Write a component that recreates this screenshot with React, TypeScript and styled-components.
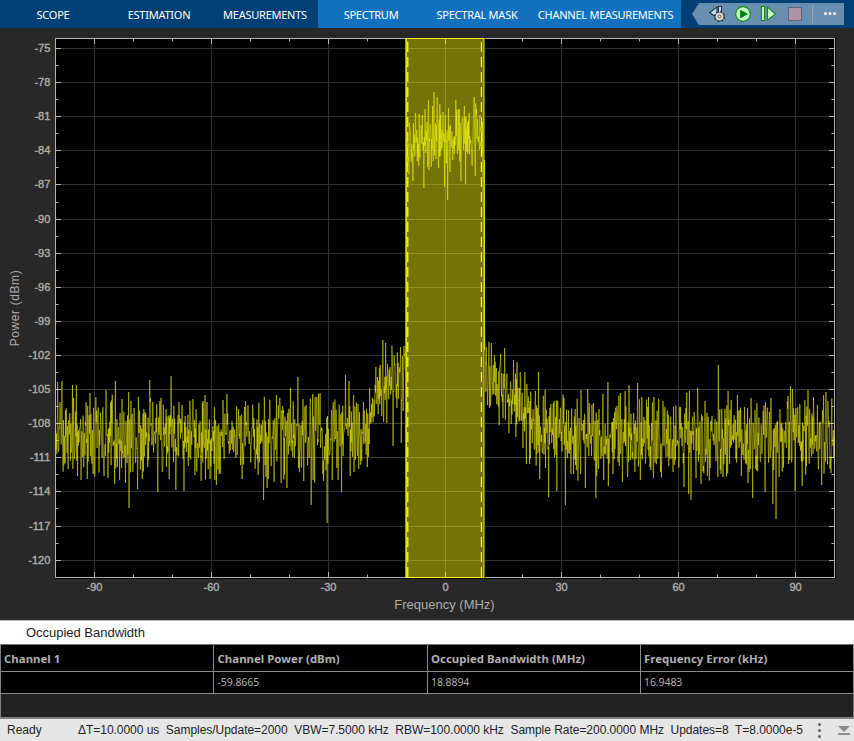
import React from "react";
import styled, { createGlobalStyle } from "styled-components";

const GlobalStyle = createGlobalStyle`
  * { box-sizing: border-box; }
  body { margin: 0; background: #282828; overflow: hidden; }
`;

const Window = styled.div`
  width: 854px;
  height: 741px;
  display: flex;
  flex-direction: column;
  background: #282828;
  font-family: "Liberation Sans", Arial, sans-serif;
`;

const Toolstrip = styled.header`
  display: flex;
  height: 28px;
  flex: none;
  background: #004076;
`;

const Tab = styled.button<{ $width: number; $contextual?: boolean }>`
  width: ${(p) => p.$width}px;
  height: 28px;
  flex: none;
  border: 0;
  padding: 2px 0 0;
  background: ${(p) => (p.$contextual ? "#1171be" : "#004076")};
  color: #fff;
  font: 11px/26px "Noto Sans", sans-serif;
  letter-spacing: -0.25px;
  text-align: center;
  white-space: nowrap;
`;

const QuickAccess = styled.div`
  display: flex;
  margin: 3px 10px 0 auto;
  width: 152px;
  height: 22px;
`;

const ChartPane = styled.main`
  height: 592px;
  flex: none;
  svg { display: block; }
`;

const PanelTitle = styled.div`
  height: 24px;
  flex: none;
  padding-left: 26px;
  background: #fff;
  border-top: 1px solid #b5b5b5;
  color: #1c1c1c;
  font-size: 13px;
  line-height: 23px;
  letter-spacing: -0.02px;
`;

const Results = styled.section`
  height: 75px;
  flex: none;
  background: #222;
  border: 1px solid #808080;
  border-bottom-width: 2px;
  border-top-color: #707476;
`;

const ResultRow = styled.div<{ $height: number }>`
  display: grid;
  grid-template-columns: 213px 214px 213px 212px;
  height: ${(p) => p.$height}px;
  border-bottom: 1px solid #8a8a8a;
  background: #000;
`;

const Cell = styled.div<{ $heading?: boolean }>`
  padding-left: 3px;
  border-right: 1px solid #8a8a8a;
  color: #b0b0b0;
  font: ${(p) => (p.$heading ? "700 11.4px/28px" : "400 10.5px/21px")} "Noto Sans", sans-serif;
  letter-spacing: ${(p) => (p.$heading ? "0.03px" : "-0.08px")};
  white-space: nowrap;
  &:nth-child(2) { padding-left: 3.5px; }
  &:last-child { border-right: 0; }
`;

const StatusBar = styled.footer`
  display: flex;
  align-items: center;
  height: 22px;
  flex: none;
  padding: 0 3px 0 7px;
  background: #e6e6e6;
  color: #222;
  font-size: 12px;
  white-space: pre;
`;

const Ready = styled.span`
  width: 71px;
`;

const Details = styled.span`
  flex: 1;
  letter-spacing: -0.036px;
`;

const AxisText = styled.text`
  fill: #acacac;
  stroke: #acacac;
  stroke-width: 0.4px;
  font: 11px "Liberation Sans", Arial, sans-serif;
`;

const AxisTitle = styled.text`
  fill: #acacac;
  font-family: "Liberation Sans", Arial, sans-serif;
  text-anchor: middle;
`;

const LEFT = 55.5;
const RIGHT = 834.5;
const TOP = 38.5;
const BOTTOM = 577.5;

// Chart coordinates are expressed in window pixels; the view box starts below the toolstrip.
const xOf = (mhz: number) => Math.floor(445 + mhz * 3.895 + (mhz > 0 && mhz < 90 ? -0.1 : 0.3)) + 0.5;
const yOf = (dbm: number) => Math.floor(48.55 + (-75 - dbm) * 11.369) + 0.5;

const xMajor = [-90, -60, -30, 0, 30, 60, 90];
const xMinor = [-80, -70, -50, -40, -20, -10, 10, 20, 40, 50, 70, 80];
const yMajor = Array.from({ length: 16 }, (_, i) => -75 - i * 3);
const yMinor = Array.from({ length: 15 }, (_, i) => -76.5 - i * 3);

// Strongest excursions of the spectrum, as [x, y] pairs.
const extremes: number[] = [
  57.5,382, 57,454, 62,381, 72.5,385, 73,469, 76.5,385, 77.6,476, 81,480, 87.3,479, 90,393, 93,474, 96,397,
  104,476, 106,390, 108,478, 114.5,484, 115.5,381, 119.5,480, 122,399, 125.5,483, 128.5,392, 129.2,508, 131,401,
  134,408, 137.5,489, 144,409, 149.5,380, 153,402, 158,492, 160,401, 162,472, 169,479, 171,376, 176,490,
  179,402, 184,491, 193,399, 195,475, 201,481, 205,395, 207,402, 210,479, 215,480, 216.5,485, 219,474,
  223,400, 227,394, 242,479, 245.5,401, 263.5,500, 264.5,397, 267,488, 274,482, 276.5,395, 281,483,
  283,413, 287,488, 290.5,388, 298,377, 303,399, 303.7,481, 306,405, 311,505, 315,397, 320,393, 323.5,481,
  327,523, 332.3,480, 333,403, 338,480, 341.5,492, 345.5,375, 349,381, 350,476, 353.5,395, 354,472,
  358,404, 363.5,402, 367.5,467, 369.5,388, 376,367, 380,365, 383,340, 383.6,422, 385.5,343, 387,423,
  392,346, 393,446, 400.5,347, 401.2,443, 403,411, 404.5,356,
  484.2,325, 485,358, 487.3,405, 489,342, 491.5,343, 496.5,368, 499,425, 500.5,354, 503,418, 504.5,348,
  509,433, 513.5,360, 516,437, 517,362, 520,372, 523,448, 525,372, 526.3,464, 529.5,464, 533,409,
  538.5,372, 539.5,479, 545,390, 548.5,497, 551,404, 554,401, 557,491, 564,398, 565.5,505, 573.5,474,
  575,409, 581,390, 585.5,488, 587.5,389, 596,498, 599,409, 603,394, 603.6,480, 608,382, 608.5,486,
  613,474, 617,406, 620.5,393, 622.4,482, 625,391, 629,385, 635,472, 637.5,383, 640.5,480, 642,397,
  648.5,397, 651,470, 654,397, 660.5,472, 663,401, 673,472, 684,487, 688.5,494, 689.5,391, 691,500,
  696,478, 697.5,388, 701,484, 705,401, 707.4,476, 718.5,365, 723,477, 728,391, 731,400, 737.5,395,
  741.5,476, 744.5,407, 748,483, 751,398, 752.5,498, 757,403, 765,492, 765.6,402, 771,398, 773,504,
  776,519, 779,477, 788,396, 790.5,386, 792.5,389, 795,491, 796,408, 802,486, 805,400, 808,390,
  813.5,397, 817.5,405, 821.5,485, 823.5,395, 826,392, 831,473,
  408.5,172, 413,181, 413.4,123, 415.7,113, 419,114, 421,125, 424,188, 425,109, 427.6,167, 428.4,100,
  434,92, 437,97, 438.6,168, 440,104, 443,112, 444.5,187, 445.5,115, 447.6,200, 448.5,108, 450,172,
  456,100, 458,109, 461,181, 464.5,106, 465.5,184, 469,113, 472,163, 474,97, 475.2,176, 476.6,109, 480,115,
];

const marks = new Map<number, number>();
for (let i = 0; i < extremes.length; i += 2) {
  marks.set(Math.round((extremes[i] - 55.7) / 0.39), extremes[i + 1]);
}

const centreStops = [
  [55, 437], [365, 437], [371, 411], [380, 390], [392, 383], [405, 369],
  [485, 365], [490, 383], [505, 388], [517, 400], [528, 416], [546, 437], [835, 437],
];

function centreAt(x: number): number {
  const k = Math.max(1, centreStops.findIndex((s) => s[0] >= x));
  const [x0, y0] = centreStops[k - 1];
  const [x1, y1] = centreStops[k];
  return y0 + ((y1 - y0) * (x - x0)) / (x1 - x0);
}

function buildTrace(): string {
  let seed = 90210;
  const random = () => {
    seed = (Math.imul(seed, 1664525) + 1013904223) >>> 0;
    return seed / 4294967296;
  };
  const points: string[] = [];
  for (let i = 0; i < 1997; i += 1) {
    const x = 55.7 + i * 0.39;
    const spread = random() + random() - 1;
    let y: number;
    if (x > 406.3 && x < 482.5) {
      y = (x < 414 ? 150 : 139) + spread * 38;
    } else if (x >= 482.5 && x < 485) {
      y = 140 + (x - 482.5) * 86;
    } else {
      y = centreAt(x) + spread * (x > 368 && x < 530 ? 37 : 46);
    }
    const marked = marks.get(i);
    points.push(`${x.toFixed(2)},${(marked ?? y).toFixed(1)}`);
  }
  return "M" + points.join("L");
}

const trace = buildTrace();

function SpectrumChart() {
  return (
    <svg width="854" height="592" viewBox="0 28 854 592">
      <rect x="55" y="38" width="781" height="541" fill="#000" />
      <g stroke="#303030">
        {xMajor.map((v) => <path key={v} d={`M${xOf(v)} ${TOP}V${BOTTOM}`} />)}
        {yMajor.map((v) => <path key={v} d={`M${LEFT} ${yOf(v)}H${RIGHT}`} />)}
      </g>
      <g stroke="#b3b3b3" fill="none">
        <rect x={LEFT} y={TOP} width={RIGHT - LEFT} height={BOTTOM - TOP} />
        {xMajor.map((v) => <path key={v} d={`M${xOf(v)} 38v6M${xOf(v)} 578v-6`} />)}
        {xMinor.map((v) => <path key={v} d={`M${xOf(v)} 38v3.5M${xOf(v)} 578v-3.5`} />)}
        {yMajor.map((v) => <path key={v} d={`M55 ${yOf(v)}h6M835 ${yOf(v)}h-6`} />)}
        {yMinor.map((v) => <path key={v} d={`M55 ${yOf(v)}h3.5M835 ${yOf(v)}h-3.5`} />)}
      </g>
      <path d={trace} fill="none" stroke="#ebeb0f" strokeOpacity="0.63" strokeWidth="0.85" strokeLinejoin="bevel" />
      <g stroke="#ffffff" strokeOpacity="0.07">
        {[-105, -108, -111].map((v) => <path key={v} d={`M56 ${yOf(v)}H405M485 ${yOf(v)}H834`} />)}
      </g>
      <rect x="405" y="38" width="80" height="540" fill="#ffff11" fillOpacity="0.45" />
      <g stroke="#d9d94a" strokeOpacity="0.08">
        {yMajor.map((v) => <path key={v} d={`M407 ${yOf(v)}H483`} />)}
        <path d="M445.5 39V577" />
      </g>
      <path d="M406.5 38V578" stroke="#e2e200" />
      <path d="M405.5 38V578" stroke="#a0a000" />
      <path d="M483.5 38V578" stroke="#b5b500" />
      <path d="M484.5 38V578" stroke="#777700" />
      <path d="M484.5 160V350" stroke="#dada08" />
      <path d="M405 38.5H484M405 577.5H484" stroke="#ffff00" />
      <path d="M407.5 42V577" stroke="#e8e820" strokeDasharray="10 5" />
      <path d="M408.5 42V577" stroke="#acac10" strokeDasharray="10 5" />
      <path d="M481.5 42V577" stroke="#f4f43d" strokeDasharray="10 5" />
      <path d="M480.5 42V577" stroke="#8c8c0a" strokeDasharray="10 5" />
      {yMajor.map((v) => <AxisText key={v} x="50.3" y={yOf(v) + 3.5} textAnchor="end">{v}</AxisText>)}
      {xMajor.map((v) => <AxisText key={v} x={xOf(v)} y="591" textAnchor="middle">{v}</AxisText>)}
      <AxisTitle x="444.5" y="609" fontSize="13">Frequency (MHz)</AxisTitle>
      <AxisTitle transform="translate(19 308) rotate(-90)" fontSize="12" letterSpacing="0.6">Power (dBm)</AxisTitle>
    </svg>
  );
}

function QuickAccessIcons() {
  return (
    <svg width="152" height="22" viewBox="692 3 152 22">
      <path d="M692 14L699 3H844V25H699Z" fill="#688fb0" />
      <path d="M717 7L709.8 12.5L717 18Z" fill="#b9e2ff" stroke="#303030" strokeWidth="1.1" />
      <rect x="718.5" y="6.5" width="3" height="9" fill="#b9e2ff" stroke="#303030" />
      <circle cx="719.5" cy="16.5" r="4.5" fill="none" stroke="#303030" strokeWidth="2.2" strokeDasharray="2 1.53" />
      <circle cx="719.5" cy="16.5" r="4.1" fill="#dedede" stroke="#505050" strokeWidth="0.7" />
      <circle cx="719.5" cy="16.5" r="1.4" fill="#fff" stroke="#333" strokeWidth="0.9" />
      <circle cx="743" cy="14" r="7.3" fill="#caffc2" stroke="#118c16" strokeWidth="1.2" />
      <path d="M740.5 10L747.5 14L740.5 18Z" fill="#007b10" stroke="#007b10" strokeWidth="0.6" />
      <path d="M761.5 6.5h3v14h-3zM767.5 7.2L775.5 14L767.5 20.2Z" fill="#caffc2" stroke="#118c16" strokeWidth="1.1" />
      <rect x="788.5" y="7.5" width="13" height="13" fill="#ad94a6" stroke="#656372" />
      <path d="M812.5 5V23" stroke="#a4a1a3" />
      <g fill="#fff">
        <circle cx="825.5" cy="13.6" r="1.5" />
        <circle cx="830" cy="13.6" r="1.5" />
        <circle cx="834.5" cy="13.6" r="1.5" />
      </g>
    </svg>
  );
}

const tabs = [
  { label: "SCOPE", width: 106 },
  { label: "ESTIMATION", width: 106 },
  { label: "MEASUREMENTS", width: 106 },
  { label: "SPECTRUM", width: 106, contextual: true },
  { label: "SPECTRAL MASK", width: 106, contextual: true },
  { label: "CHANNEL MEASUREMENTS", width: 151, contextual: true },
];

const headings = ["Channel 1", "Channel Power (dBm)", "Occupied Bandwidth (MHz)", "Frequency Error (kHz)"];
const values = ["", "-59.8665", "18.8894", "16.9483"];

const statusText =
  "ΔT=10.0000 us  Samples/Update=2000  VBW=7.5000 kHz  RBW=100.0000 kHz  Sample Rate=200.0000 MHz  Updates=8  T=8.0000e-5";

export default function App() {
  return (
    <Window>
      <GlobalStyle />
      <Toolstrip>
        {tabs.map((t) => (
          <Tab key={t.label} $width={t.width} $contextual={t.contextual}>{t.label}</Tab>
        ))}
        <QuickAccess><QuickAccessIcons /></QuickAccess>
      </Toolstrip>
      <ChartPane><SpectrumChart /></ChartPane>
      <PanelTitle>Occupied Bandwidth</PanelTitle>
      <Results>
        <ResultRow $height={27}>
          {headings.map((h) => <Cell key={h} $heading>{h}</Cell>)}
        </ResultRow>
        <ResultRow $height={22}>
          {values.map((v, i) => <Cell key={i}>{v}</Cell>)}
        </ResultRow>
      </Results>
      <StatusBar>
        <Ready>Ready</Ready>
        <Details>{statusText}</Details>
        <svg width="38" height="22" viewBox="813 719 38 22">
          <g fill="#606060">
            <circle cx="819.5" cy="724.5" r="1.5" />
            <circle cx="819.5" cy="730.5" r="1.5" />
            <circle cx="819.5" cy="736.5" r="1.5" />
          </g>
          <path d="M838 726h12l-6 6zM838 733h12v2h-12z" fill="#8c8c8c" />
        </svg>
      </StatusBar>
    </Window>
  );
}
